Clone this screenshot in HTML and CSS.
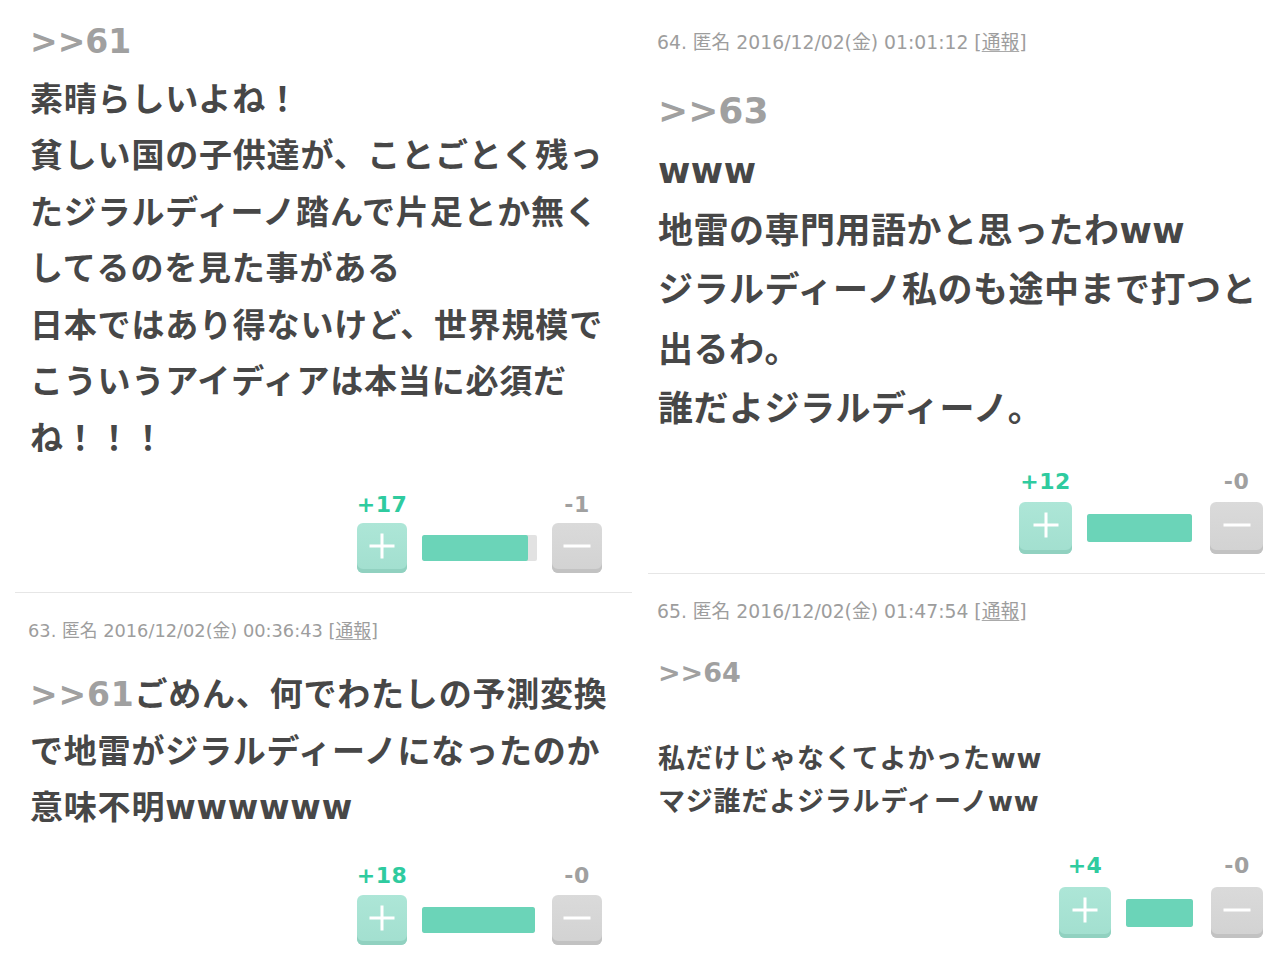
FILE: index.html
```html
<!DOCTYPE html>
<html lang="ja">
<head>
<meta charset="utf-8">
<title>コメント</title>
<link rel="stylesheet" href="styles.css">
</head>
<body>
<div class="collage">
  <div class="col col-left">
    <section class="panel p1">
      <div class="ref">&gt;&gt;61</div>
      <div class="body">素晴らしいよね！<br>貧しい国の子供達が、ことごとく残っ<br>たジラルディーノ踏んで片足とか無く<br>してるのを見た事がある<br>日本ではあり得ないけど、世界規模で<br>こういうアイディアは本当に必須だ<br>ね！！！</div>
      <div class="vote">
        <span class="count good">+17</span>
        <span class="count bad">-1</span>
        <span class="btn plus"></span>
        <span class="bar"><span class="fill" style="width:92%"></span></span>
        <span class="btn minus"></span>
      </div>
    </section>
    <section class="panel p3">
      <div class="meta">63. 匿名 2016/12/02(金) 00:36:43 [<u>通報</u>]</div>
      <div class="body"><span class="ref-in">&gt;&gt;61</span>ごめん、何でわたしの予測変換<br>で地雷がジラルディーノになったのか<br>意味不明wwwwww</div>
      <div class="vote">
        <span class="count good">+18</span>
        <span class="count bad">-0</span>
        <span class="btn plus"></span>
        <span class="bar"><span class="fill" style="width:100%"></span></span>
        <span class="btn minus"></span>
      </div>
    </section>
  </div>
  <div class="col col-right">
    <section class="panel p2">
      <div class="meta">64. 匿名 2016/12/02(金) 01:01:12 [<u>通報</u>]</div>
      <div class="ref">&gt;&gt;63</div>
      <div class="body">www<br>地雷の専門用語かと思ったわww<br>ジラルディーノ私のも途中まで打つと<br>出るわ。<br>誰だよジラルディーノ。</div>
      <div class="vote">
        <span class="count good">+12</span>
        <span class="count bad">-0</span>
        <span class="btn plus"></span>
        <span class="bar"><span class="fill" style="width:100%"></span></span>
        <span class="btn minus"></span>
      </div>
    </section>
    <section class="panel p4">
      <div class="meta">65. 匿名 2016/12/02(金) 01:47:54 [<u>通報</u>]</div>
      <div class="ref">&gt;&gt;64</div>
      <div class="body">私だけじゃなくてよかったww<br>マジ誰だよジラルディーノww</div>
      <div class="vote">
        <span class="count good">+4</span>
        <span class="count bad">-0</span>
        <span class="btn plus"></span>
        <span class="bar"><span class="fill" style="width:100%"></span></span>
        <span class="btn minus"></span>
      </div>
    </section>
  </div>
</div>
</body>
</html>
```

FILE: styles.css
```css
* { box-sizing: border-box; }

html, body {
  margin: 0;
  padding: 0;
  background: #ffffff;
}

body {
  font-family: "Noto Sans CJK JP", "Noto Sans", sans-serif;
  color: #444444;
}

.collage {
  width: 1280px;
  height: 960px;
  display: grid;
  grid-template-columns: 632px 632px;
  column-gap: 16px;
  overflow: hidden;
}

.col {
  display: flex;
  flex-direction: column;
}

.panel {
  display: flex;
  flex-direction: column;
  white-space: nowrap;
}

.meta {
  font-family: "DejaVu Sans", "Noto Sans CJK JP", sans-serif;
  color: #9d9d9d;
  line-height: 24px;
}

.meta u {
  text-decoration-color: #aaaaaa;
  text-underline-offset: 2px;
}

.ref, .ref-in {
  color: #a0a0a0;
  font-weight: 700;
  font-family: "DejaVu Sans", "Noto Sans CJK JP", sans-serif;
}

.body {
  font-family: "DejaVu Sans", "Noto Sans CJK JP", sans-serif;
  font-weight: 700;
  color: #474747;
}

/* vote block: counts centred above the two buttons */
.vote {
  align-self: flex-end;
  display: grid;
  grid-template-columns: auto auto auto;
  align-items: center;
}

.count {
  grid-row: 1;
  display: flex;
  justify-content: center;
  margin: 0 -20px;
  font-family: "DejaVu Sans", "Noto Sans CJK JP", sans-serif;
  font-weight: 700;
  line-height: 24px;
  letter-spacing: 0.5px;
}

.count.good { grid-column: 1; color: #2fcb9f; }
.count.bad { grid-column: 3; color: #a0a0a0; }

.btn, .bar { grid-row: 2; }

.btn {
  position: relative;
  display: block;
  border-radius: 6px;
}

.btn.plus {
  grid-column: 1;
  background: linear-gradient(#ade6d7, #a2dfcf);
  box-shadow: inset 0 -4px 0 #91d1c0;
}

.btn.minus {
  grid-column: 3;
  background: linear-gradient(#dadada, #d2d2d2);
  box-shadow: inset 0 -4px 0 #c2c2c2;
}

.btn::before,
.btn::after {
  content: "";
  position: absolute;
  background: #ffffff;
  left: 50%;
  top: 46%;
  transform: translate(-50%, -50%);
}

.btn.plus::before { width: 25px; height: 3px; }
.btn.plus::after { width: 3px; height: 25px; }
.btn.minus::before { width: 27px; height: 3px; }
.btn.minus::after { display: none; }

.bar {
  grid-column: 2;
  display: block;
  background: #e2e2e2;
  border-radius: 2px;
  overflow: hidden;
}

.fill {
  display: block;
  height: 100%;
  background: #6bd4b8;
  border-radius: 2px;
}

/* panel 1: top-left */
.p1 {
  height: 593px;
  padding: 20px 30px 0 15px;
  margin-left: 15px;
  border-bottom: 1px solid #e6e6e6;
}
.p1 .ref { font-size: 33px; line-height: 44px; }
.p1 .body { font-size: 33px; line-height: 56.5px; letter-spacing: 0.8px; margin-top: 7.5px; }
.p1 .vote { margin-top: 25.5px; }
.p1 .count { font-size: 22px; margin-bottom: 6px; }
.p1 .btn { width: 50px; height: 50px; }
.p1 .bar { width: 115px; height: 26px; margin: 0 15px; }

/* panel 3: bottom-left */
.p3 {
  flex: 1;
  padding: 26px 30px 0 28px;
}
.p3 .meta { font-size: 17.8px; }
.p3 .ref-in { font-size: 33px; }
.p3 .body { font-size: 33px; line-height: 56.5px; letter-spacing: 0.8px; margin-top: 24px; padding-left: 2px; }
.p3 .vote { margin-top: 27px; }
.p3 .count { font-size: 22px; margin-bottom: 7px; }
.p3 .btn { width: 50px; height: 50px; }
.p3 .bar { width: 113px; height: 26px; margin: 0 17px 0 15px; }

/* panel 2: top-right */
.p2 {
  height: 574px;
  padding: 31px 2px 0 9px;
  border-bottom: 1px solid #e6e6e6;
  margin-right: 15px;
}
.p2 .meta { font-size: 18.8px; }
.p2 .ref { font-size: 36px; line-height: 48px; margin-top: 32px; padding-left: 1px; }
.p2 .body { font-size: 35px; line-height: 59.5px; letter-spacing: 0.5px; margin-top: 7px; padding-left: 1px; }
.p2 .vote { margin-top: 30px; }
.p2 .count { font-size: 22px; margin-bottom: 8px; }
.p2 .btn { width: 53px; height: 52px; }
.p2 .bar { width: 105px; height: 28px; margin: 0 18px 0 15px; }

/* panel 4: bottom-right */
.p4 {
  flex: 1;
  padding: 26px 17px 0 9px;
}
.p4 .meta { font-size: 18.8px; }
.p4 .ref { font-size: 27px; line-height: 40px; margin-top: 29px; padding-left: 1px; }
.p4 .body { font-size: 27px; line-height: 43px; letter-spacing: 0.8px; margin-top: 44px; padding-left: 1px; }
.p4 .vote { margin-top: 31px; }
.p4 .count { font-size: 22px; margin-bottom: 9px; }
.p4 .btn { width: 52px; height: 51px; }
.p4 .bar { width: 67px; height: 28px; margin: 0 18px 0 15px; }
```
